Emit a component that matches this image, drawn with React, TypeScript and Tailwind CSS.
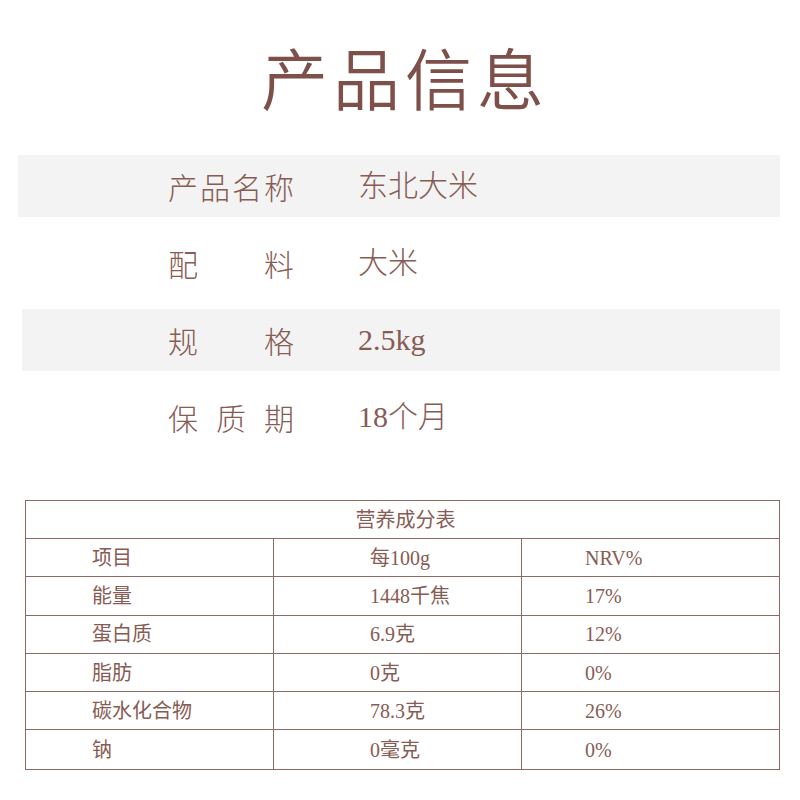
import React from 'react';

const infoRows = [
  { label: ['产', '品', '名', '称'], value: '东北大米', shaded: true },
  { label: ['配', '料'], value: '大米', shaded: false },
  { label: ['规', '格'], value: '2.5kg', shaded: true },
  { label: ['保', '质', '期'], value: '18个月', shaded: false },
];

const nutrition = [
  ['项目', '每100g', 'NRV%'],
  ['能量', '1448千焦', '17%'],
  ['蛋白质', '6.9克', '12%'],
  ['脂肪', '0克', '0%'],
  ['碳水化合物', '78.3克', '26%'],
  ['钠', '0毫克', '0%'],
];

const font = { fontFamily: '"Liberation Serif", "Noto Sans CJK SC", serif' };
const cjk = { fontFamily: '"Noto Sans CJK SC", sans-serif', fontWeight: 300 };

export default function App() {
  return (
    <div className="w-[800px] h-[800px] bg-white text-[#875c54] overflow-hidden" style={font}>
      {/* title */}
      <div className="pt-[42px] flex justify-center">
        <h1 className="text-[67px] leading-none tracking-[5px] pl-[10px] text-[#7e5049]"
          style={{ fontFamily: '"Noto Sans CJK SC", sans-serif', fontWeight: 350 }}>
          产品信息
        </h1>
      </div>

      {/* product info */}
      <div className="mt-[46px] flex flex-col gap-[15px]">
        {infoRows.map((row, i) => (
          <div key={i}
            className={`h-[62px] flex items-center text-[30px] leading-none ${row.shaded ? 'bg-[#f4f3f3]' : ''} ${i === 2 ? 'ml-[22px]' : 'ml-[18px]'} mr-[20px]`}>
            <div className={`flex justify-between w-[126px] ${i === 2 ? 'ml-[146px]' : 'ml-[150px]'}`}>
              {row.label.map((c, j) => (
                <span key={j} style={cjk}>{c}</span>
              ))}
            </div>
            <div className="ml-[64px]" style={{ fontWeight: 300 }}>{row.value}</div>
          </div>
        ))}
      </div>

      {/* nutrition table */}
      <div className="mt-[52px] ml-[25px] w-[755px] border-[1.5px] border-[#8c6a64] text-[20px] leading-none">
        <div className="h-[38px] flex items-center justify-center border-b-[1.5px] border-[#8c6a64]">
          <span className="pl-[6px]">营养成分表</span>
        </div>
        {nutrition.map((r, i) => (
          <div key={i}
            className={`grid grid-cols-[248px_248px_1fr] h-[38.3px] ${i < nutrition.length - 1 ? 'border-b-[1.5px] border-[#8c6a64]' : ''}`}>
            <div className="flex items-center pl-[66px] border-r-[1.5px] border-[#8c6a64]">{r[0]}</div>
            <div className="flex items-center pl-[96px] border-r-[1.5px] border-[#8c6a64]">{r[1]}</div>
            <div className="flex items-center pl-[63px]">{r[2]}</div>
          </div>
        ))}
      </div>
    </div>
  );
}
